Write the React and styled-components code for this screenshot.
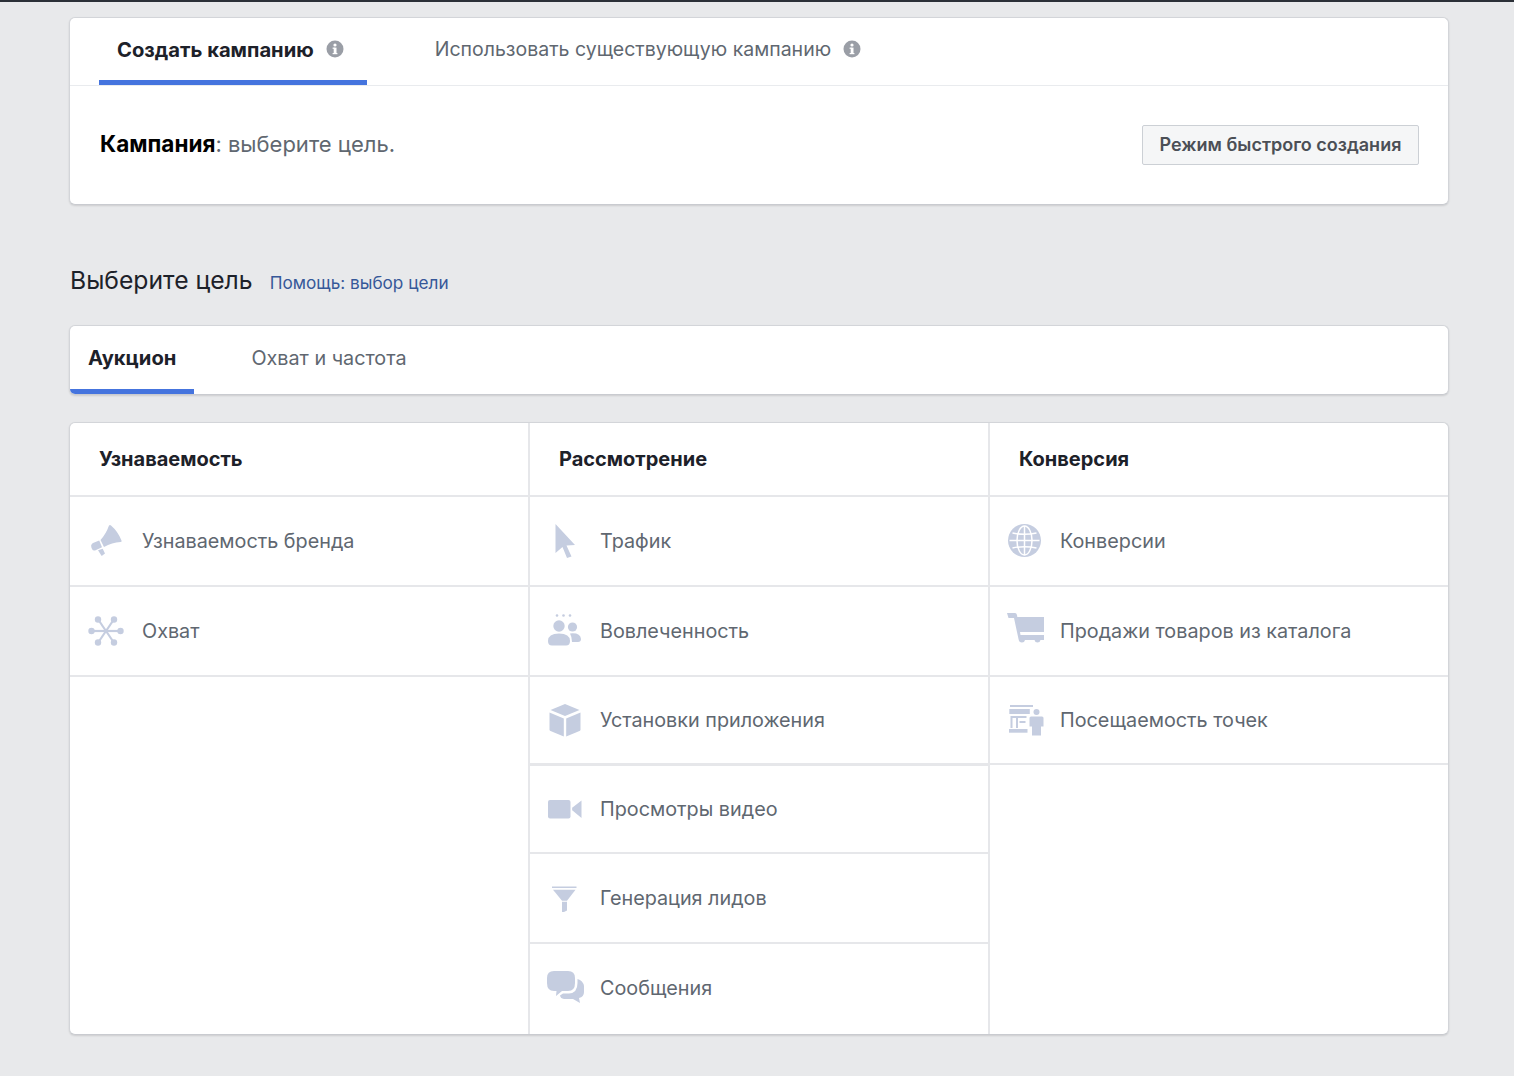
import React from 'react';
import styled, { createGlobalStyle } from 'styled-components';

const GlobalStyle = createGlobalStyle`
  html, body {
    margin: 0;
    background: #e8e9eb;
    font-family: Inter, "Noto Sans", "Liberation Sans", sans-serif;
  }
`;

const Page = styled.div`
  width: 1514px;
  height: 1076px;
  box-sizing: border-box;
  overflow: hidden;
  border-top: 2px solid #2b3037;
  padding: 15px 65px 0 69px;
`;

const Card = styled.section`
  box-sizing: border-box;
  background: #fff;
  border: 1px solid #d3d5d9;
  border-bottom-color: #c9cbd0;
  border-radius: 6px;
  box-shadow: 0 1px 2px rgba(0, 0, 0, 0.12);
  overflow: hidden;
`;

const TabBar = styled.div`
  display: flex;
  height: ${p => p.$height}px;
  gap: ${p => p.$gap}px;
  padding-left: ${p => p.$inset}px;
  box-sizing: border-box;
  border-bottom: ${p => (p.$line ? '1px solid #e9ebee' : 'none')};
`;

const Tab = styled.div`
  display: flex;
  align-items: center;
  gap: 12px;
  height: 100%;
  box-sizing: border-box;
  padding: 0 ${p => p.$pad}px 0 18px;
  font-size: ${p => p.$size}px;
  font-weight: ${p => (p.$active ? 700 : 400)};
  color: ${p => (p.$active ? '#1d2129' : '#606770')};
  border-bottom: 5px solid ${p => (p.$active ? '#4574de' : 'transparent')};
`;

const CampaignRow = styled.div`
  height: 118px;
  display: flex;
  align-items: center;
  justify-content: space-between;
  padding: 0 29px 0 30px;
`;

const CampaignText = styled.div`
  font-size: 22px;
  color: #606770;
  padding-bottom: 4px;
  b {
    font-size: 22.5px;
    font-weight: 700;
    color: #000;
  }
`;

const QuickButton = styled.button`
  height: 40px;
  width: 277px;
  box-sizing: border-box;
  padding: 0 0 2px;
  background: #f5f6f7;
  border: 1px solid #ccd0d5;
  border-radius: 2px;
  font-family: inherit;
  font-size: 18px;
  font-weight: 600;
  color: #4b4f56;
`;

const Heading = styled.div`
  display: flex;
  align-items: baseline;
  gap: 17px;
  height: 120px;
  box-sizing: border-box;
  padding-top: 60px;
  margin-left: 1px;
`;

const Title = styled.h2`
  margin: 0;
  font-size: 24.7px;
  font-weight: 400;
  color: #1d2129;
`;

const HelpLink = styled.a`
  font-size: 17.2px;
  color: #365899;
`;

const ObjectivesCard = styled(Card)`
  display: grid;
  grid-template-columns: 460px 460px 1fr;
  height: 613px;
  margin-top: 27px;
`;

const Column = styled.div`
  border-right: ${p => (p.$last ? 'none' : '2px solid #e6e7ea')};
`;

const ColumnHead = styled.div`
  height: 72px;
  display: flex;
  align-items: center;
  padding-left: 29px;
  font-size: 20px;
  font-weight: 700;
  color: #1d2129;
  border-bottom: 2px solid #e6e7ea;
`;

const Row = styled.div`
  height: ${p => p.$height}px;
  box-sizing: border-box;
  display: flex;
  align-items: center;
  gap: ${p => p.$inset}px;
  padding-left: ${p => p.$inset}px;
  padding-bottom: ${p => (p.$end ? 2 : 0)}px;
  font-size: 19.8px;
  color: #606770;
  border-bottom: ${p => (p.$thick ? 3 : 2)}px solid #e6e7ea;
  &:last-child {
    border-bottom: ${p => (p.$end ? 'none' : '2px solid #e6e7ea')};
  }
`;

const Glyph = styled.svg`
  width: 36px;
  height: 36px;
  flex: none;
  fill: #c5cde0;
  overflow: visible;
`;

const InfoGlyph = styled.svg`
  width: 18px;
  height: 18px;
  flex: none;
`;

const Info = () => (
  <InfoGlyph viewBox="0 0 18 18">
    <circle cx="9" cy="9" r="8.5" fill="#9a9ea6" />
    <rect x="7.7" y="7.6" width="2.8" height="6.4" fill="#fff" />
    <rect x="6.6" y="7.6" width="2" height="1.2" fill="#fff" />
    <rect x="6.6" y="13" width="4.8" height="1.2" fill="#fff" />
    <circle cx="9" cy="5" r="1.6" fill="#fff" />
  </InfoGlyph>
);

const Megaphone = () => (
  <Glyph viewBox="0 0 36 36">
    <path d="M21 2.500 Q22 1.500 23 2.500 Q30 8.500 33.500 17.500 Q34 19 32.500 19 Q24 19.500 16 24 L12.500 17 Q18 11 21 2.500 Z" />
    <path d="M11.200 17.500 L14 24.300 L7 27.500 Q5 28 4 26 Q3 24 3.200 22.500 Q3.500 20.800 5 20 Z" />
    <path d="M10 27.300 L14.700 25.800 L17 30.500 L13.700 33 Z" />
  </Glyph>
);

const Reach = () => (
  <Glyph viewBox="0 0 36 36">
    <g stroke="#c5cde0" strokeWidth="2.200">
      <line x1="18" y1="18" x2="10.500" y2="7" />
      <line x1="18" y1="18" x2="25.500" y2="7" />
      <line x1="18" y1="18" x2="3" y2="18" />
      <line x1="18" y1="18" x2="33" y2="18" />
      <line x1="18" y1="18" x2="10.500" y2="29" />
      <line x1="18" y1="18" x2="25.500" y2="29" />
    </g>
    <circle cx="10" cy="6.500" r="3.200" />
    <circle cx="26" cy="6.500" r="3.200" />
    <circle cx="3.500" cy="18" r="3.200" />
    <circle cx="32.500" cy="18" r="3.200" />
    <circle cx="10" cy="29.500" r="3.200" />
    <circle cx="26" cy="29.500" r="3.200" />
  </Glyph>
);

const Cursor = () => (
  <Glyph viewBox="0 0 36 36">
    <path d="M8.500 1 L28 22 L19.500 22.500 L24.500 33.500 L20 35 L15.500 24 L8.500 30 Z" />
  </Glyph>
);

const People = () => (
  <Glyph viewBox="0 0 36 36">
    <circle cx="10" cy="2.500" r="1.300" />
    <circle cx="16.500" cy="2.500" r="1.300" />
    <circle cx="23" cy="2.500" r="1.300" />
    <circle cx="12" cy="13" r="5.700" />
    <circle cx="25.500" cy="14" r="4.600" />
    <path d="M1 28 Q1 20.500 12 20.500 Q23 20.500 23 28 Q23 32.500 19 32.500 L5 32.500 Q1 32.500 1 28 Z" />
    <path d="M23 20.500 Q33.500 19.500 34 26 Q34 29 31 29 L25 29 Q25 24 23 20.500 Z" />
  </Glyph>
);

const Box = () => (
  <Glyph viewBox="0 0 36 36">
    <path d="M18 2 L32.500 8 L18 14 L3.500 8 Z" />
    <path d="M2.500 10.500 L16.800 16.500 L16.800 34.500 L3.500 29 Q2.500 28.500 2.500 27.500 Z" />
    <path d="M33.500 10.500 L19.200 16.500 L19.200 34.500 L32.500 29 Q33.500 28.500 33.500 27.500 Z" />
  </Glyph>
);

const Video = () => (
  <Glyph viewBox="0 0 36 36">
    <rect x="1" y="9" width="22.500" height="18.500" rx="2" />
    <path d="M34.500 9.500 L34.500 27 L25.500 19.500 Q24.500 18 25.500 16.500 Z" />
  </Glyph>
);

const Funnel = () => (
  <Glyph viewBox="0 0 36 36">
    <rect x="5" y="6.500" width="24.500" height="1.500" />
    <path d="M6 9.700 L28.500 9.700 L20 20.700 L15 20.700 Z" />
    <path d="M15 21.700 L20 21.700 L20 30.500 L17 32 L15 32 Z" />
  </Glyph>
);

const Chat = () => (
  <Glyph viewBox="0 0 36 36">
    <path d="M7 1 L21 1 Q28 1 28 8 L28 13 Q28 21 21 21 L15 21 L9 26 L9.500 21 L7 21 Q0 21 0 13 L0 8 Q0 1 7 1 Z" />
    <path d="M30.500 9 Q36 10.500 37 16 L37 22 Q37 27 32 28 L33 33 L26 29 L17 29 Q13.500 28.500 13 25.500 L16 23.500 L22 23.500 Q30.500 23 30.500 13 Z" />
  </Glyph>
);

const Globe = () => (
  <Glyph viewBox="0 0 36 36">
    <circle cx="17.500" cy="17.500" r="16.500" />
    <g fill="none" stroke="#fff" strokeWidth="1.500">
      <ellipse cx="17.500" cy="17.500" rx="7.500" ry="14.500" />
      <line x1="17.500" y1="3" x2="17.500" y2="32" />
      <line x1="2.500" y1="17.500" x2="32.500" y2="17.500" />
      <path d="M5.500 10 Q17.500 12.500 29.500 10" />
      <path d="M5.500 25 Q17.500 22.500 29.500 25" />
    </g>
  </Glyph>
);

const Cart = () => (
  <Glyph viewBox="0 0 36 36">
    <path d="M0 0 L8 0 Q9.500 0 10 2 L10.300 4 L37 4 L37 19 L13 19 L13.500 22 L37 22 L37 27 L33.500 27 Q33 29.500 30.500 29.500 Q28 29.500 27.500 27 L18 27 Q17.500 29.500 15 29.500 Q12 29.500 11.500 26 L7 5 L1.500 5 Z" />
  </Glyph>
);

const Store = () => (
  <Glyph viewBox="0 0 36 36">
    <rect x="3" y="3" width="23" height="2" />
    <rect x="2.300" y="7" width="20.500" height="5" />
    <path d="M3.500 14 L19.500 14 L19.500 16 L11 16 L11 26 L9 26 L9 16 L5.500 16 L5.500 26 L3.500 26 Z" />
    <rect x="12.500" y="19" width="6" height="2" />
    <rect x="2" y="27" width="18.500" height="3.700" />
    <circle cx="29.500" cy="10" r="3" />
    <path d="M22.500 16 Q22.500 14.500 24 14.500 L35 14.500 Q36.500 14.500 36.500 16 L36.500 24.500 L34 24.500 L34 33.500 L25 33.500 L25 24.500 L22.500 24.500 Z" />
  </Glyph>
);

const columns = [
  {
    title: 'Узнаваемость',
    inset: 18,
    rows: [
      { label: 'Узнаваемость бренда', icon: <Megaphone />, height: 90 },
      { label: 'Охват', icon: <Reach />, height: 90 },
    ],
  },
  {
    title: 'Рассмотрение',
    inset: 17,
    rows: [
      { label: 'Трафик', icon: <Cursor />, height: 90 },
      { label: 'Вовлеченность', icon: <People />, height: 90 },
      { label: 'Установки приложения', icon: <Box />, height: 89, thick: true },
      { label: 'Просмотры видео', icon: <Video />, height: 88 },
      { label: 'Генерация лидов', icon: <Funnel />, height: 90 },
      { label: 'Сообщения', icon: <Chat />, height: 90, end: true },
    ],
  },
  {
    title: 'Конверсия',
    inset: 17,
    rows: [
      { label: 'Конверсии', icon: <Globe />, height: 90 },
      { label: 'Продажи товаров из каталога', icon: <Cart />, height: 90 },
      { label: 'Посещаемость точек', icon: <Store />, height: 88 },
    ],
  },
];

export default function App() {
  return (
    <Page>
      <GlobalStyle />
      <Card>
        <TabBar $height={68} $gap={50} $inset={29} $line>
          <Tab $active $size={20.2} $pad={23}>
            Создать кампанию
            <Info />
          </Tab>
          <Tab $size={19.5} $pad={0}>
            Использовать существующую кампанию
            <Info />
          </Tab>
        </TabBar>
        <CampaignRow>
          <CampaignText>
            <b>Кампания</b>: выберите цель.
          </CampaignText>
          <QuickButton>Режим быстрого создания</QuickButton>
        </CampaignRow>
      </Card>

      <Heading>
        <Title>Выберите цель</Title>
        <HelpLink>Помощь: выбор цели</HelpLink>
      </Heading>

      <Card>
        <TabBar $height={68} $gap={39} $inset={0}>
          <Tab $active $size={20.2} $pad={18}>Аукцион</Tab>
          <Tab $size={19.8} $pad={0}>Охват и частота</Tab>
        </TabBar>
      </Card>

      <ObjectivesCard>
        {columns.map((col, i) => (
          <Column key={col.title} $last={i === columns.length - 1}>
            <ColumnHead>{col.title}</ColumnHead>
            {col.rows.map(row => (
              <Row
                key={row.label}
                $inset={col.inset}
                $height={row.height}
                $thick={row.thick}
                $end={row.end}
              >
                {row.icon}
                {row.label}
              </Row>
            ))}
          </Column>
        ))}
      </ObjectivesCard>
    </Page>
  );
}
